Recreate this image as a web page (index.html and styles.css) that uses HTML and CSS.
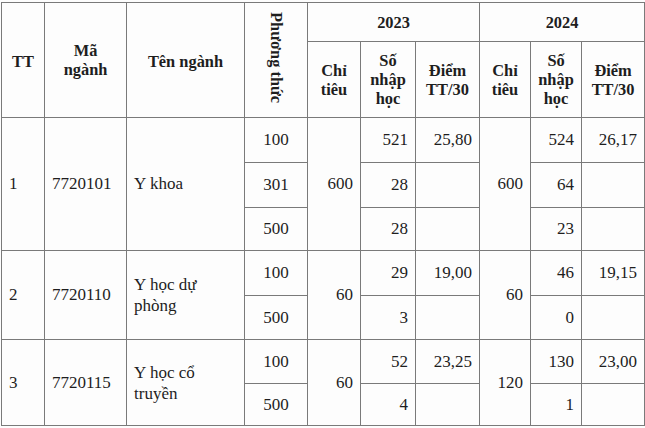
FILE: index.html
```html
<!DOCTYPE html>
<html lang="vi">
<head>
<meta charset="utf-8">
<link rel="stylesheet" href="styles.css">
</head>
<body>
<table class="grid">
  <colgroup>
    <col class="c-tt"><col class="c-ma"><col class="c-ten"><col class="c-pt">
    <col class="c-ct"><col class="c-so"><col class="c-diem">
    <col class="c-ct2"><col class="c-so2"><col class="c-diem2">
  </colgroup>
  <thead>
    <tr class="h1">
      <th rowspan="2" class="hd">TT</th>
      <th rowspan="2">Mã<br>ngành</th>
      <th rowspan="2" class="hd">Tên ngành</th>
      <th rowspan="2" class="pt"><span class="vert">Phương thức</span></th>
      <th colspan="3">2023</th>
      <th colspan="3">2024</th>
    </tr>
    <tr class="h2">
      <th>Chỉ<br>tiêu</th>
      <th>Số<br>nhập<br>học</th>
      <th>Điểm<br>TT/30</th>
      <th>Chỉ<br>tiêu</th>
      <th>Số<br>nhập<br>học</th>
      <th>Điểm<br>TT/30</th>
    </tr>
  </thead>
  <tbody>
    <tr class="r45">
      <td rowspan="3" class="l">1</td>
      <td rowspan="3" class="l">7720101</td>
      <td rowspan="3" class="l">Y khoa</td>
      <td class="c">100</td>
      <td rowspan="3" class="r">600</td>
      <td class="r">521</td>
      <td class="r">25,80</td>
      <td rowspan="3" class="r">600</td>
      <td class="r">524</td>
      <td class="r">26,17</td>
    </tr>
    <tr class="r45">
      <td class="c">301</td>
      <td class="r">28</td>
      <td></td>
      <td class="r">64</td>
      <td></td>
    </tr>
    <tr class="r43">
      <td class="c">500</td>
      <td class="r">28</td>
      <td></td>
      <td class="r">23</td>
      <td></td>
    </tr>
    <tr class="r45">
      <td rowspan="2" class="l">2</td>
      <td rowspan="2" class="l">7720110</td>
      <td rowspan="2" class="l name">Y học dự<br>phòng</td>
      <td class="c">100</td>
      <td rowspan="2" class="r">60</td>
      <td class="r">29</td>
      <td class="r">19,00</td>
      <td rowspan="2" class="r">60</td>
      <td class="r">46</td>
      <td class="r">19,15</td>
    </tr>
    <tr class="r44">
      <td class="c">500</td>
      <td class="r">3</td>
      <td></td>
      <td class="r">0</td>
      <td></td>
    </tr>
    <tr class="r44">
      <td rowspan="2" class="l">3</td>
      <td rowspan="2" class="l">7720115</td>
      <td rowspan="2" class="l name">Y học cổ<br>truyền</td>
      <td class="c">100</td>
      <td rowspan="2" class="r">60</td>
      <td class="r">52</td>
      <td class="r">23,25</td>
      <td rowspan="2" class="r">120</td>
      <td class="r">130</td>
      <td class="r">23,00</td>
    </tr>
    <tr class="r42">
      <td class="c">500</td>
      <td class="r">4</td>
      <td></td>
      <td class="r">1</td>
      <td></td>
    </tr>
  </tbody>
</table>
</body>
</html>
```
FILE: styles.css
```css
html, body {
  margin: 0;
  padding: 0;
  background: #fdfdfd;
}
body {
  font-family: "Liberation Serif", "Times New Roman", serif;
  font-size: 17px;
  color: #1e1e1e;
}
.grid {
  border-collapse: collapse;
  table-layout: fixed;
  width: 643px;
  margin: 2px 0 0 1px;
}
.c-tt { width: 43px; }
.c-ma { width: 82px; }
.c-ten { width: 118px; }
.c-pt { width: 63px; }
.c-ct { width: 53px; }
.c-so { width: 55px; }
.c-diem { width: 64px; }
.c-ct2 { width: 51px; }
.c-so2 { width: 51px; }
.c-diem2 { width: 63px; }

.grid th, .grid td {
  border: 1px solid #7a7a7a;
  padding: 0;
  vertical-align: middle;
}
.grid th {
  font-weight: bold;
  font-size: 16.4px;
  text-align: center;
  line-height: 19px;
}
.grid th.hd { padding-top: 3px; }
.h1 { height: 39px; }
.h2 { height: 76px; }
.vert {
  display: inline-block;
  writing-mode: vertical-rl;
  line-height: 20px;
}
.grid td { line-height: 22px; }
.r45 { height: 45px; }
.r44 { height: 44px; }
.r43 { height: 43px; }
.r42 { height: 42px; }
.grid td.l { text-align: left; padding-left: 7px; }
.grid td.r { text-align: right; padding-right: 7px; }
.grid td.c { text-align: center; }
.grid td.name { line-height: 21px; }
```
